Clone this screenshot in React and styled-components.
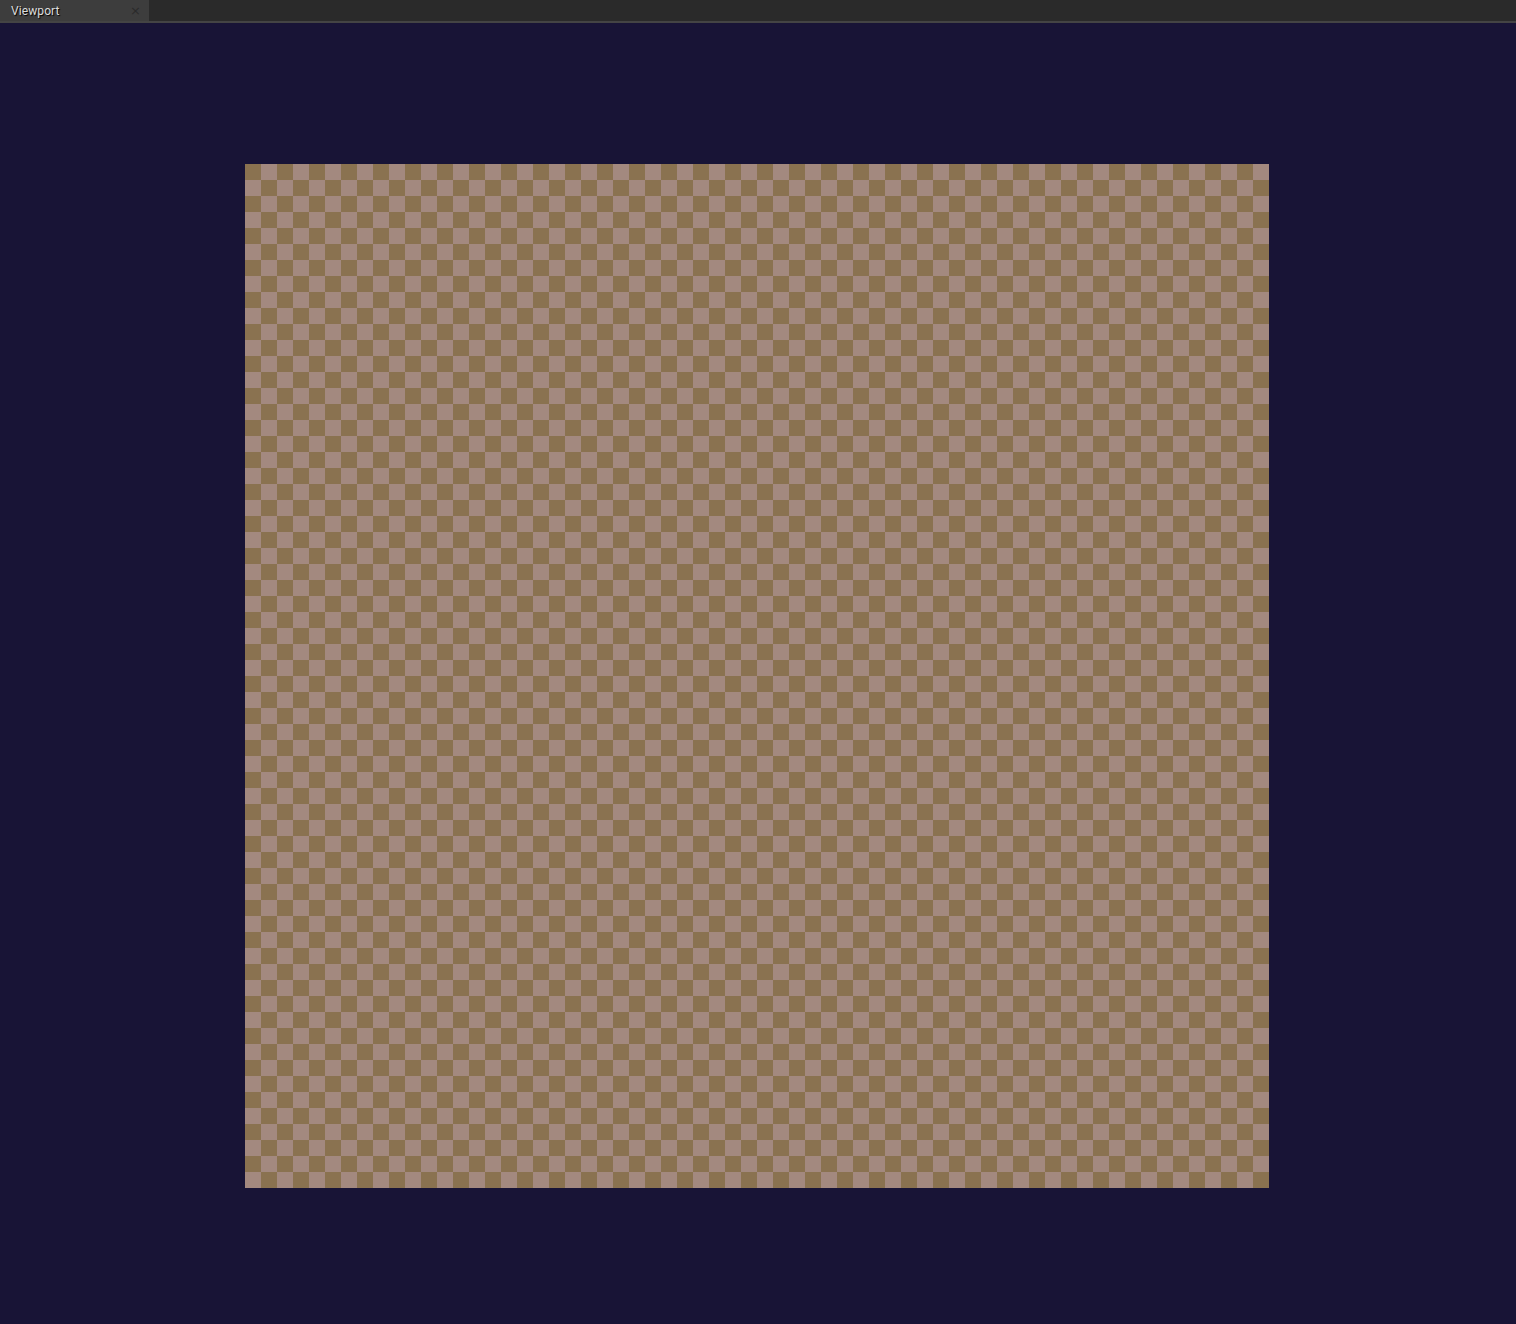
import React from "react";
import styled, { createGlobalStyle } from "styled-components";

const Global = createGlobalStyle`
  html, body { margin: 0; padding: 0; background: #181436; }
  body { font-family: "Liberation Sans", Arial, sans-serif; }
`;

const Shell = styled.div`
  width: 1516px;
  height: 1324px;
  display: flex;
  flex-direction: column;
  background: #181436;
  overflow: hidden;
`;

const TabBar = styled.div`
  height: 21px;
  display: flex;
  align-items: stretch;
  background: #2a2a2a;
  border-bottom: 2px solid #444444;
  flex-shrink: 0;
`;

const Tab = styled.div`
  width: 149px;
  display: flex;
  align-items: center;
  justify-content: space-between;
  padding: 0 8px 0 11px;
  box-sizing: border-box;
  background: #3d3d3d;
`;

const TabLabel = styled.span`
  font-family: "Roboto", "Liberation Sans", sans-serif;
  font-size: 12px;
  color: #dcdcdc;
  text-shadow: 1px 1px 1px #000;
  letter-spacing: 0.1px;
`;

const Close = styled.span`
  font-family: "DejaVu Sans", sans-serif;
  font-size: 13px;
  color: #2a2a2a;
  line-height: 1;
`;

const Viewport = styled.div`
  flex: 1;
  display: flex;
  justify-content: center;
  align-items: flex-start;
  padding-top: 141px;
  padding-right: 2px;
`;

const Checker = styled.div`
  width: 1024px;
  height: 1024px;
  flex-shrink: 0;
  background-color: #8a7250;
  background-image:
    conic-gradient(#a3897f 0 25%, transparent 0 50%, #a3897f 0 75%, transparent 0);
  background-size: 32px 32px;
`;

export default function App() {
  return (
    <>
      <Global />
      <Shell>
        <TabBar>
          <Tab>
            <TabLabel>Viewport</TabLabel>
            <Close>×</Close>
          </Tab>
        </TabBar>
        <Viewport>
          <Checker />
        </Viewport>
      </Shell>
    </>
  );
}
